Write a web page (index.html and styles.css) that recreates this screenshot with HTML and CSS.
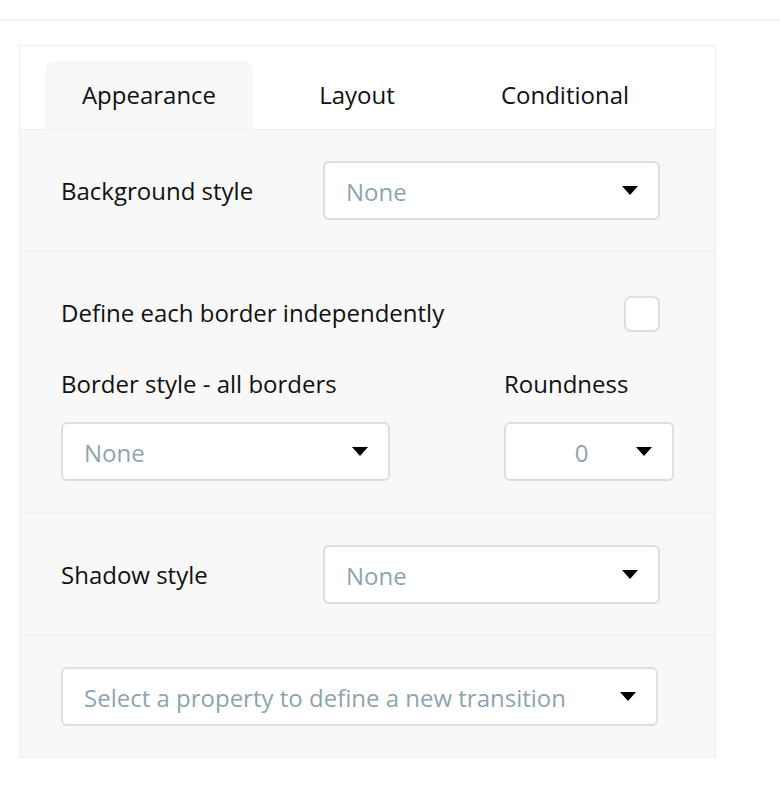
FILE: index.html
```html
<!DOCTYPE html>
<html>
<head>
<meta charset="utf-8">
<link rel="stylesheet" href="styles.css">
</head>
<body>
<div class="topbar"></div>
<div class="panel">
  <div class="tabs">
    <div class="tab active">Appearance</div>
    <div class="tab">Layout</div>
    <div class="tab">Conditional</div>
  </div>
  <div class="content">
    <div class="section row-section">
      <div class="label">Background style</div>
      <div class="select wide"><span class="val">None</span><span class="caret"></span></div>
    </div>
    <div class="section border-section">
      <div class="check-row">
        <div class="label">Define each border independently</div>
        <div class="checkbox"></div>
      </div>
      <div class="border-grid">
        <div class="label">Border style - all borders</div>
        <div class="label">Roundness</div>
        <div class="select bstyle"><span class="val">None</span><span class="caret"></span></div>
        <div class="select round"><span class="val center">0</span><span class="caret"></span></div>
      </div>
    </div>
    <div class="section row-section">
      <div class="label">Shadow style</div>
      <div class="select wide"><span class="val">None</span><span class="caret"></span></div>
    </div>
    <div class="section last-section">
      <div class="select full"><span class="val">Select a property to define a new transition</span><span class="caret"></span></div>
    </div>
  </div>
</div>
</body>
</html>
```
FILE: styles.css
```css
* { box-sizing: border-box; }
body {
  margin: 0;
  background: #fff;
  font-family: "Open Sans", "Noto Sans", sans-serif;
  font-size: 24px;
  color: #111;
}
.topbar {
  height: 21px;
  border-bottom: 2px solid #f3f3f3;
}
.panel {
  margin: 24px 0 0 19px;
  width: 697px;
  border: 1px solid #efefef;
  background: #fff;
}
.tabs {
  display: flex;
  padding: 15px 0 0 25px;
  height: 84px;
  border-bottom: 1px solid #f0f0f0;
}
.tab {
  width: 208px;
  display: flex;
  align-items: center;
  justify-content: center;
  border-radius: 10px 10px 0 0;
  padding-bottom: 2px;
}
.tab.active { background: #f8f8f8; }
.content { background: #f8f8f8; }
.section { border-bottom: 2px solid #f2f2f2; }
.section:last-child { border-bottom: none; }
.label { line-height: 30px; }
.row-section {
  display: grid;
  grid-template-columns: 262px 337px;
  align-items: center;
  padding: 31px 0 30px 41px;
}
.select {
  height: 59px;
  background: #fff;
  border: 2px solid #dedede;
  border-radius: 6px;
  display: flex;
  align-items: center;
  justify-content: space-between;
  padding: 0 20px 0 21px;
  color: #8fa4ad;
}
.val { line-height: 30px; padding-top: 3px; }
.val.center { flex: 1; text-align: center; }
.caret {
  width: 0; height: 0;
  border-left: 8px solid transparent;
  border-right: 8px solid transparent;
  border-top: 9px solid #000;
}
.border-section { padding: 44px 0 31px 41px; }
.check-row {
  display: flex;
  align-items: center;
  justify-content: space-between;
  width: 599px;
}
.check-row .label { padding-bottom: 3px; }
.checkbox {
  width: 36px; height: 36px;
  background: #fff;
  border: 2px solid #dedede;
  border-radius: 7px;
}
.border-grid {
  display: grid;
  grid-template-columns: 329px 170px;
  column-gap: 114px;
  row-gap: 23px;
  margin-top: 37px;
}
.last-section { padding: 31px 0 31px 41px; }
.select.full { width: 597px; }
```
